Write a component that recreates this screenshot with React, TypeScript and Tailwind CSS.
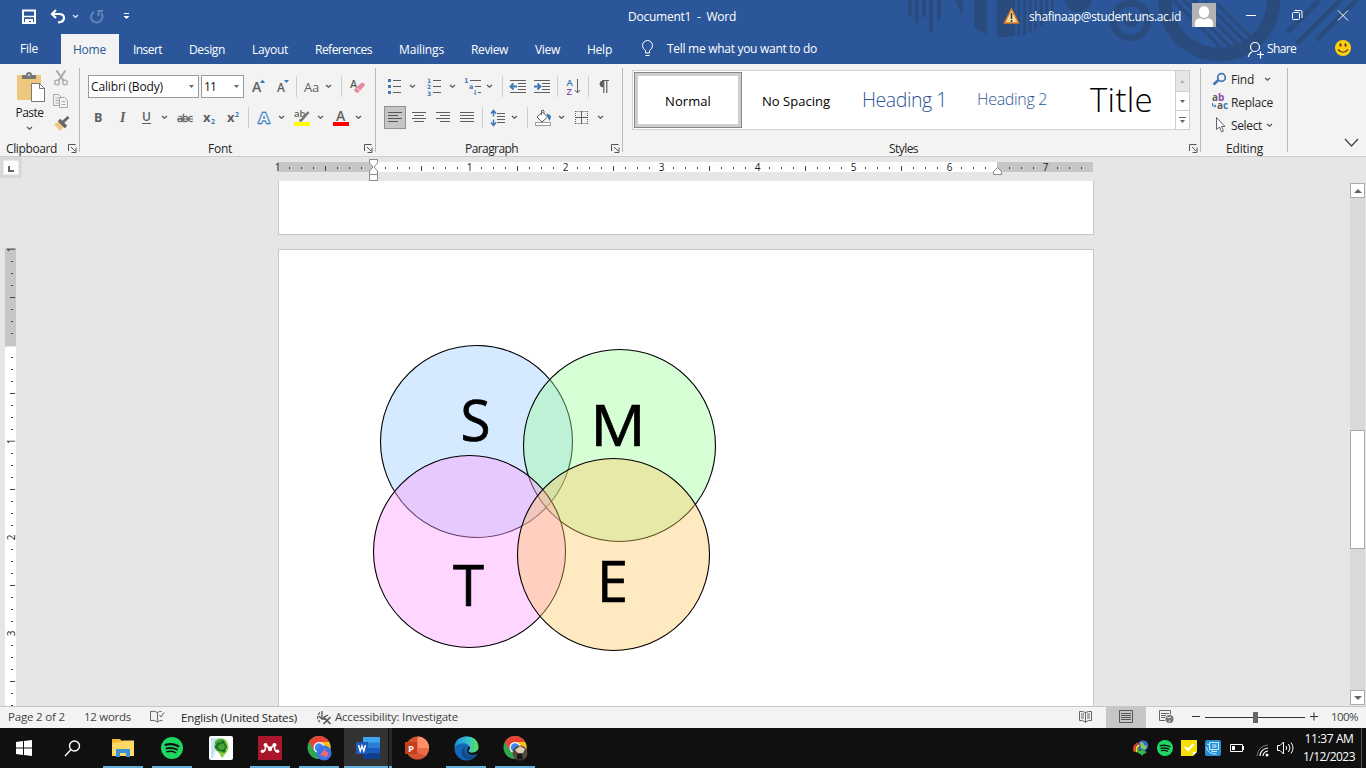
import { useLayoutEffect, useRef, useState, type ReactNode } from "react";

/* A line of text whose tracking is tuned so that it spans `w` pixels. */
function T({ w, children, className = "" }: { w: number; children: string; className?: string }) {
  const ref = useRef<HTMLSpanElement>(null);
  const [ls, setLs] = useState(0);
  useLayoutEffect(() => {
    if (ref.current) {
      const natural = ref.current.getBoundingClientRect().width;
      setLs((w - natural) / children.length);
    }
  }, [w, children]);
  return (
    <span
      ref={ref}
      className={`inline-block shrink-0 whitespace-pre leading-4 ${className}`}
      style={{ letterSpacing: `${ls}px` }}
    >
      {children}
    </span>
  );
}

/* Icon frame; the drawing uses window coordinates through the view box. */
function I({ b, className = "", children }: { b: [number, number, number, number]; className?: string; children: ReactNode }) {
  return (
    <svg width={b[2]} height={b[3]} viewBox={b.join(" ")} className={`shrink-0 overflow-visible ${className}`} fill="none">
      {children}
    </svg>
  );
}

function Chev({ className = "" }: { className?: string }) {
  return (
    <svg width="7" height="5" viewBox="0 0 7 5" className={`shrink-0 ${className}`} fill="none">
      <path d="M1 1l2.5 2.3L6 1" stroke="#555" strokeWidth="1.2" />
    </svg>
  );
}

function Sep({ className = "" }: { className?: string }) {
  return <div className={`h-[21px] w-px shrink-0 bg-[#cfcfcf] ${className}`} />;
}

function Launcher({ className = "" }: { className?: string }) {
  return (
    <svg width="9" height="9" viewBox="0 0 9 9" className={`shrink-0 ${className}`} fill="none" stroke="#555">
      <path d="M.5 7V.5H7.5M3 3l4 4M8 3.5V8.5H3.5" />
    </svg>
  );
}

function Tri({ className = "" }: { className?: string }) {
  return (
    <svg width="5" height="3" viewBox="0 0 5 3" className={`shrink-0 ${className}`}>
      <path d="M0 0h5L2.5 3z" fill="#666" />
    </svg>
  );
}

function Header() {
  return (
    <header className="relative h-16 shrink-0 bg-[#2b579a] text-xs text-white [&_span]:translate-y-px">
      <svg className="absolute right-0 top-0" width="476" height="64" viewBox="0 0 1428 192" fill="#2a4b7d">
        <path d="M54 0h12v47H54zM75 0h11v69H75zM96 0h11v51H96zM117 0h12v96h-12zM141 0h12v59h-12z" />
        <path d="M197 0h22v45Q203 26 197 0zM252 0h39v102Q270 94 252 82zM320 0h42v111H320zM362 0h13v109h-13zM382 0h9v107h-9zM399 0h9v104h-9zM416 0h9v98h-9zM433 0h8v89h-8zM449 0h9v78h-9zM466 0h9v62h-9zM483 0h8v38h-8z" />
        <circle cx="565" cy="-3" r="40" />
        <circle cx="722" cy="62" r="52" fill="none" stroke="#2a4b7d" strokeWidth="20" />
        <circle cx="722" cy="62" r="21" />
        <circle cx="988" cy="0" r="163" fill="none" stroke="#2a4b7d" strokeWidth="41" />
        <path d="M850 0l140 140M880 0l140 140M910 0l132 132M945 5l118 118M980 10l100 100" stroke="#2a4b7d" strokeWidth="10" />
        <path d="M1190 98L1288 0M1220 132L1352 0M1280 120L1400 0" stroke="#2a4b7d" strokeWidth="14" />
      </svg>
      <div className="relative flex h-[34px] items-center pb-0.5">
        <I b={[22, 9, 15, 15]} className="ml-[22px]">
          <path d="M23 10.500h12v12.500H23z" stroke="#fff" strokeWidth="2" />
          <path d="M22 16.500h14" stroke="#fff" strokeWidth="1.500" />
          <path d="M25 19h8v5h-2v-3h-2v3h-4z" fill="#fff" />
        </I>
        <I b={[50, 9, 16, 15]} className="ml-[13px]">
          <path d="M56 10l-4 4 4 4M52 14h7q5 0 5 4t-6 4.500" stroke="#fff" strokeWidth="2.200" />
        </I>
        <svg width="7" height="5" viewBox="0 0 7 5" className="ml-[6px]" fill="none">
          <path d="M1 1l2.500 2.300L6 1" stroke="#dbe4f0" strokeWidth="1.300" />
        </svg>
        <I b={[90, 9, 14, 15]} className="ml-[11px]">
          <path d="M94 11.800A5.700 5.700 0 1 0 101 13M98.500 16v-5h4.500" stroke="#6485b7" strokeWidth="1.900" />
        </I>
        <I b={[123, 13, 7, 8]} className="ml-[19px]">
          <path d="M124 14.500h5" stroke="#fff" />
          <path d="M123.500 17h6l-3 3z" fill="#fff" />
        </I>
        <T w={108} className="ml-[498px]">Document1  -  Word</T>
        <I b={[1004, 7, 16, 16]} className="ml-[268px]">
          <path d="M1011.500 8l7 14h-14z" fill="#f7dca0" stroke="#dc7a22" strokeWidth="1.500" />
          <path d="M1011.500 12v6M1011.500 19v2" stroke="#333" strokeWidth="1.500" />
        </I>
        <T w={152} className="ml-[9px]">shafinaap@student.uns.ac.id</T>
        <I b={[1192, 3, 24, 24]} className="-mt-0.5 ml-[11px]">
          <path d="M1192 3h24v24h-24z" fill="#b3b3b3" />
          <ellipse cx="1204" cy="12" rx="5.200" ry="6" fill="#fff" />
          <path d="M1195 27v-4q0-4 5-5 4 2.500 8 0 5 1 5 5v4z" fill="#fff" />
        </I>
        <I b={[1246, 10, 10, 10]} className="ml-[30px]"><path d="M1246 14.500h10" stroke="#fff" /></I>
        <I b={[1292, 9, 11, 12]} className="ml-[36px]">
          <rect x="1292.500" y="11.500" width="7" height="7" rx="1" stroke="#fff" />
          <path d="M1294.500 9.500h6q1.500 0 1.500 1.500v6" stroke="#fff" />
        </I>
        <I b={[1338, 10, 10, 10]} className="ml-[35px]"><path d="M1338 9.500l10 10M1348 9.500l-10 10" stroke="#fff" /></I>
      </div>
      <nav className="relative flex h-[30px] items-center">
        <T w={18} className="-mt-0.5 ml-5">File</T>
        <div className="ml-[23px] flex h-full w-[58px] items-center bg-[#f3f3f3] pl-3 text-[#2b579a]"><T w={33}>Home</T></div>
        <T w={29} className="ml-[14px]">Insert</T>
        <T w={36} className="ml-[27px]">Design</T>
        <T w={36} className="ml-[27px]">Layout</T>
        <T w={57} className="ml-[27px]">References</T>
        <T w={45} className="ml-[27px]">Mailings</T>
        <T w={37} className="ml-[27px]">Review</T>
        <T w={25} className="ml-[27px]">View</T>
        <T w={25} className="ml-[27px]">Help</T>
        <I b={[641, 41, 13, 18]} className="ml-[29px]">
          <path d="M645.500 54v-2.500q-3-2-3-5a5 5 0 0 1 10 0q0 3-3 5V54zM645.500 56.500h4" stroke="#fff" />
        </I>
        <T w={150} className="-mt-0.5 ml-[13px]">Tell me what you want to do</T>
        <I b={[1248, 40, 16, 17]} className="ml-[431px]">
          <circle cx="1255" cy="46" r="4.500" stroke="#fff" strokeWidth="1.200" />
          <path d="M1248.500 56q.5-4 4-5.500M1260.500 50.500v7M1257 53.500h7" stroke="#fff" strokeWidth="1.200" />
        </I>
        <T w={29} className="-mt-0.5 ml-[3px]">Share</T>
        <I b={[1335, 40, 16, 16]} className="-mt-0.5 ml-[39px]">
          <circle cx="1343" cy="48" r="8" fill="#ffcf0b" />
          <path d="M1340.500 43.500v3M1345.500 43.500v3" stroke="#333" strokeWidth="1.800" />
          <path d="M1338 49.500q5 5.500 10 0" stroke="#4b4020" strokeWidth="1.200" />
        </I>
      </nav>
    </header>
  );
}

function Divider() {
  return <div className="mt-1 h-[84px] w-px shrink-0 bg-[#b9b9b9]" />;
}

function Clipboard() {
  return (
    <section className="flex w-[79px] shrink-0 flex-col">
      <div className="flex h-[76px]">
        <div className="ml-[14px] flex w-[31px] flex-col items-center pt-[7px]">
          <I b={[15, 71, 31, 32]} className="ml-px">
            <path d="M17 75h24v25H17z" fill="#edc77d" />
            <path d="M22 79v-4h4q0-3 3-3t3 3h4v4z" fill="#777" />
            <circle cx="29" cy="75" r="1" fill="#eee" />
            <path d="M31.500 83.500h8l5 5v13h-13z" fill="#fff" stroke="#777" />
            <path d="M39.500 83.500v5h5" stroke="#777" />
          </I>
          <T w={28} className="mt-0.5 text-xs text-[#222]">Paste</T>
          <Chev className="mt-[5px]" />
        </div>
        <div className="ml-[8px] flex flex-col gap-[7px] pt-[6px]">
          <I b={[53, 70, 16, 16]}>
            <path d="M56.500 70.500l7 10M65.500 70.500l-7 10" stroke="#aaa" strokeWidth="2" />
            <circle cx="57" cy="82.500" r="2.300" stroke="#aaa" strokeWidth="1.300" />
            <circle cx="65" cy="82.500" r="2.300" stroke="#aaa" strokeWidth="1.300" />
          </I>
          <I b={[53, 93, 16, 16]}>
            <path d="M53.500 94.500h5l3 3v8h-8zM55.500 98h4M55.500 100.500h4M55.500 103h4" stroke="#aaa" />
            <path d="M59.500 97.500h5l3 3v7h-8z" fill="#f3f3f3" stroke="#aaa" />
            <path d="M61.500 101.500h4M61.500 104.500h4" stroke="#aaa" />
          </I>
          <I b={[53, 116, 17, 16]}>
            <path d="M54 124l5-2 5 5-4 4z" fill="#edc77d" />
            <path d="M59 120l7 7" stroke="#666" strokeWidth="3.500" />
            <path d="M63 122l5.500-5" stroke="#666" strokeWidth="3" />
          </I>
        </div>
      </div>
      <div className="flex h-4 items-center [&_span]:translate-y-px">
        <T w={51} className="ml-[6px]">Clipboard</T>
        <Launcher className="ml-[11px]" />
      </div>
    </section>
  );
}

const G = "#5f5f5f";

function FontGroup() {
  return (
    <section className="flex w-[295px] shrink-0 flex-col pt-[11px]">
      <div className="flex h-[23px] items-center">
        <div className="ml-2 flex h-[23px] w-[111px] shrink-0 items-center border border-[#9a9a9a] bg-white pl-0.5 text-[#111]">
          <T w={72}>Calibri (Body)</T>
          <Tri className="ml-[26px]" />
        </div>
        <div className="ml-0.5 flex h-[23px] w-[43px] shrink-0 items-center border border-[#9a9a9a] bg-white pl-0.5 text-[#111]">
          <T w={12}>11</T>
          <Tri className="ml-[18px]" />
        </div>
        <I b={[252, 76, 14, 20]} className="ml-2">
          <text x="252" y="91" fontSize="14" fontWeight="600" fill={G}>A</text>
          <path d="M260 82l2.500-3.500L265 82z" fill="#3e78b5" />
        </I>
        <I b={[277, 76, 14, 20]} className="ml-[11px]">
          <text x="277" y="91" fontSize="12" fontWeight="600" fill={G}>A</text>
          <path d="M284 79l2.500 3 2.500-3z" fill="#3e78b5" />
        </I>
        <Sep className="ml-[5px]" />
        <T w={15} className="ml-[7px] text-[13px] text-[#5f5f5f]">Aa</T>
        <Chev className="ml-[6px]" />
        <Sep className="ml-[9px]" />
        <I b={[350, 77, 16, 17]} className="ml-2">
          <text x="350" y="87" fontSize="11" fontWeight="600" fill={G}>A</text>
          <path d="M354 89l6-6q4-3 5 1l-6 7q-3 2-5-2z" fill="#e8879a" />
          <path d="M356.500 86.500l4 4" stroke="#f9e3e7" />
        </I>
      </div>
      <div className="mt-2 flex h-[23px] items-center">
        <I b={[94, 108, 10, 18]} className="ml-[14px]"><text x="94" y="120.500" fontSize="12.500" fontWeight="700" fill={G}>B</text></I>
        <I b={[118, 108, 10, 18]} className="ml-[14px]"><text x="120" y="120.500" fontSize="14" fontStyle="italic" fontWeight="600" fontFamily="Liberation Serif" fill={G}>I</text></I>
        <I b={[142, 108, 10, 18]} className="ml-[14px]">
          <text x="142" y="120" fontSize="12" fontWeight="600" fill={G}>U</text>
          <path d="M142 122.500h9" stroke={G} />
        </I>
        <Chev className="ml-[9px]" />
        <I b={[178, 108, 17, 18]} className="ml-[9px]">
          <text x="178" y="121" fontSize="11" textLength="16" fill={G} stroke={G} strokeWidth=".3">abc</text>
          <path d="M178 118h16" stroke={G} />
        </I>
        <I b={[204, 108, 14, 18]} className="ml-[9px]">
          <text x="204" y="120.500" fontSize="13" fontWeight="700" fill={G}>x</text>
          <text x="212" y="123" fontSize="7" fontWeight="700" fill="#3e78b5">2</text>
        </I>
        <I b={[228, 108, 14, 18]} className="ml-[10px]">
          <text x="228" y="120.500" fontSize="13" fontWeight="700" fill={G}>x</text>
          <text x="236" y="115.500" fontSize="7" fontWeight="700" fill="#3e78b5">2</text>
        </I>
        <Sep className="ml-[7px]" />
        <I b={[257, 108, 17, 18]} className="ml-[7px]">
          <text x="260" y="122" fontSize="15" fontWeight="600" fill="#fff" stroke="#9fc1e4" strokeWidth="3.500" strokeLinejoin="round" paintOrder="stroke">A</text>
          <text x="260" y="122" fontSize="15" fontWeight="600" fill="#fff" stroke="#3e78b5" strokeWidth="1.800" paintOrder="stroke">A</text>
        </I>
        <Chev className="ml-[5px]" />
        <I b={[295, 108, 17, 18]} className="ml-[9px]">
          <text x="295" y="116" fontSize="9.500" fontWeight="600" fill={G}>ab</text>
          <path d="M309.500 111l-7 8-2 1" stroke="#777" strokeWidth="2.600" />
          <path d="M295 121h16v4h-16z" fill="#ff0" />
        </I>
        <Chev className="ml-[6px]" />
        <I b={[334, 108, 16, 18]} className="ml-[9px]">
          <text x="337" y="120" fontSize="14" fontWeight="600" fill={G}>A</text>
          <path d="M334 121h16v4h-16z" fill="red" />
        </I>
        <Chev className="ml-[6px]" />
      </div>
      <div className="mt-[11px] flex h-4 items-center [&_span]:translate-y-px">
        <T w={24} className="ml-32">Font</T>
        <Launcher className="ml-[132px]" />
      </div>
    </section>
  );
}

function Paragraph() {
  return (
    <section className="flex w-[246px] shrink-0 flex-col pt-[11px]">
      <div className="flex h-[23px] items-center">
        <I b={[387, 77, 15, 18]} className="ml-[11px]">
          <path d="M393 79.500h8M393 85.500h8M393 91.500h8" stroke={G} />
          <path d="M388 78h3v3h-3zM388 84h3v3h-3zM388 90h3v3h-3z" fill="#3e78b5" />
        </I>
        <Chev className="ml-[7px]" />
        <I b={[426, 77, 16, 18]} className="ml-[10px]">
          <path d="M433 79.500h8M433 85.500h8M433 91.500h8" stroke={G} />
          <g fontSize="6" fontWeight="700" fill="#3e78b5" fontFamily="DejaVu Sans"><text x="427" y="81.500">1</text><text x="427" y="88">2</text><text x="427" y="94.500">3</text></g>
        </I>
        <Chev className="ml-[7px]" />
        <I b={[464, 77, 18, 18]} className="ml-[8px]">
          <path d="M470 79.500h11M475 85.500h6M478 91.500h3" stroke={G} />
          <g fontSize="6.500" fontWeight="700" fill="#3e78b5" fontFamily="DejaVu Sans"><text x="464" y="82">1</text><text x="469" y="88">a</text><text x="474" y="94">i</text></g>
        </I>
        <Chev className="ml-[4px]" />
        <Sep className="ml-[9px]" />
        <I b={[510, 77, 16, 18]} className="ml-[7px]">
          <path d="M510 79.500h16M518 82.500h8M518 85.500h8M518 88.500h8M510 91.500h16" stroke={G} />
          <path d="M517 85.500h-6M513.500 82.500l-3 3 3 3" stroke="#3e78b5" strokeWidth="1.800" />
        </I>
        <I b={[534, 77, 16, 18]} className="ml-[8px]">
          <path d="M534 79.500h16M542 82.500h8M542 85.500h8M542 88.500h8M534 91.500h16" stroke={G} />
          <path d="M534 85.500h6M537.500 82.500l3 3-3 3" stroke="#3e78b5" strokeWidth="1.800" />
        </I>
        <Sep className="ml-[7px]" />
        <I b={[566, 77, 15, 18]} className="ml-[8px]">
          <text x="566.500" y="85" fontSize="9.500" fontWeight="600" fill="#3e78b5">A</text>
          <text x="566.500" y="94" fontSize="9.500" fontWeight="600" fill="#8d4bb0">Z</text>
          <path d="M577.500 78v13M575 89l2.500 3 2.500-3" stroke={G} />
        </I>
        <Sep className="ml-[7px]" />
        <I b={[599, 78, 10, 16]} className="ml-[10px]">
          <path d="M603 80a3 3 0 0 0 0 6z" fill={G} stroke={G} />
          <path d="M602 79.500h7M603.800 79v13M606.800 79v13" stroke={G} strokeWidth="1.200" />
        </I>
      </div>
      <div className="mt-2 flex h-[23px] items-center">
        <div className="ml-[8px] flex h-[23px] w-[22px] items-center justify-center border border-[#919191] bg-[#c6c6c6]">
          <I b={[388, 111, 14, 13]}><path d="M388 112.500h14M388 115.500h10M388 118.500h14M388 121.500h10" stroke="#555" /></I>
        </div>
        <I b={[412, 111, 14, 13]} className="ml-[6px]"><path d="M412 112.500h14M414 115.500h10M412 118.500h14M414 121.500h10" stroke={G} /></I>
        <I b={[436, 111, 14, 13]} className="ml-[10px]"><path d="M436 112.500h14M440 115.500h10M436 118.500h14M440 121.500h10" stroke={G} /></I>
        <I b={[460, 111, 14, 13]} className="ml-[10px]"><path d="M460 112.500h14M460 115.500h14M460 118.500h14M460 121.500h14" stroke={G} /></I>
        <Sep className="ml-[8px]" />
        <I b={[490, 108, 15, 18]} className="ml-[7px]">
          <path d="M497 112.500h8M497 115.500h8M497 118.500h8M497 121.500h8" stroke={G} />
          <path d="M493.500 110v5.500M493.500 118.500v6M491 112.500l2.500-3 2.500 3M491 121.500l2.500 3 2.500-3" stroke="#3e78b5" strokeWidth="1.500" />
        </I>
        <Chev className="ml-[6px]" />
        <Sep className="ml-[9px]" />
        <I b={[535, 108, 17, 18]} className="ml-[7px]">
          <path d="M542.500 111l5 5-5.500 5-5-5zM541.500 114v-4.500q2-1.500 2.500 1v2" fill="#fff" stroke={G} />
          <path d="M546.500 112.500q5 1 4.500 4l-1.500 3.500-2-4z" fill="#3e78b5" />
          <path d="M535.500 121.500h15v3h-15z" fill="#fff" stroke="#999" />
        </I>
        <Chev className="ml-[6px]" />
        <I b={[575, 110, 14, 14]} className="ml-[10px]">
          <path d="M575.500 110.500h12.500M575.500 122.500h12.500M575.500 110v13M587.500 110v13" stroke={G} strokeDasharray="1 1" />
          <path d="M575 116.500h13M581.500 110v13" stroke={G} />
        </I>
        <Chev className="ml-[8px]" />
      </div>
      <div className="mt-[11px] flex h-4 items-center [&_span]:translate-y-px">
        <T w={53} className="ml-[89px]">Paragraph</T>
        <Launcher className="ml-[93px]" />
      </div>
    </section>
  );
}

function Styles() {
  return (
    <section className="flex w-[577px] shrink-0 flex-col pl-[9px] pt-[6px]">
      <div className="flex h-[60px] w-[558px] border border-[#cfcfcf] bg-white text-black">
        <div className="ml-px mt-px flex h-14 w-[108px] shrink-0 border border-[#868686]">
          <div className="flex flex-1 items-center justify-center border-[3px] border-[#cdcdcd] pt-0.5"><T w={46} className="text-[13px]">Normal</T></div>
        </div>
        <div className="flex items-center">
          <T w={68} className="ml-5 mt-0.5 text-[13px]">No Spacing</T>
          <T w={85} className="ml-8 text-[19.5px] font-light text-[#2f5496]">Heading 1</T>
          <T w={70} className="-mt-0.5 ml-[30px] text-[16px] font-light text-[#2f5496]">Heading 2</T>
          <T w={63} className="ml-[43px] text-[33px] font-light leading-8">Title</T>
        </div>
        <div className="ml-auto flex w-[14px] shrink-0 flex-col border-l border-[#cfcfcf]">
          <div className="flex h-[21px] items-center justify-center border-b border-[#cfcfcf] bg-[#e6e6e6]"><Tri className="rotate-180 opacity-40" /></div>
          <div className="flex h-[19px] items-center justify-center border-b border-[#cfcfcf]"><Tri /></div>
          <div className="flex flex-1 flex-col items-center justify-center gap-0.5"><div className="h-px w-[7px] bg-[#666]" /><Tri /></div>
        </div>
      </div>
      <div className="mt-[10px] flex h-4 items-center [&_span]:translate-y-px">
        <T w={29} className="ml-[257px]">Styles</T>
        <Launcher className="ml-[271px]" />
      </div>
    </section>
  );
}

function Editing() {
  return (
    <section className="flex w-[86px] shrink-0 flex-col pt-[6px] [&_span]:translate-y-px">
      <div className="flex h-[18px] items-center">
        <I b={[1212, 70, 16, 16]} className="ml-[11px]">
          <circle cx="1221.500" cy="76.500" r="3.800" stroke="#3e78b5" strokeWidth="1.700" />
          <path d="M1218.500 79l-5 4.500" stroke="#3e78b5" strokeWidth="2.600" />
        </I>
        <T w={23} className="ml-[3px]">Find</T>
        <Chev className="ml-[10px]" />
      </div>
      <div className="mt-[5px] flex h-[18px] items-center">
        <I b={[1211, 92, 18, 18]} className="ml-[10px]">
          <text x="1212" y="100" fontSize="10" fontWeight="700" fill={G}>a<tspan fill="#8d4bb0">b</tspan></text>
          <text x="1217" y="108" fontSize="10" fontWeight="700" fill={G}>a<tspan fill="#3e78b5">c</tspan></text>
          <path d="M1212.500 102v3h3.500M1214.500 103.500l1.500 1.500-1.500 1.500" stroke="#3e78b5" />
        </I>
        <T w={42} className="ml-0.5">Replace</T>
      </div>
      <div className="mt-[5px] flex h-[18px] items-center">
        <I b={[1214, 116, 12, 16]} className="ml-[13px]">
          <path d="M1216.500 116.500v12l3-2.500 2 5 2-1-2-4.500h3.500z" fill="#fff" stroke="#666" />
        </I>
        <T w={31} className="ml-[5px]">Select</T>
        <Chev className="ml-1" />
      </div>
      <div className="mt-1.5 flex h-4 items-center"><T w={37} className="ml-[25px]">Editing</T></div>
    </section>
  );
}

function Ribbon() {
  return (
    <div className="flex h-[93px] shrink-0 border-b border-[#cdcdcd] bg-[#f3f3f3] text-xs text-[#262626]">
      <Clipboard /><Divider /><FontGroup /><Divider /><Paragraph /><Divider /><Styles /><Divider /><Editing /><Divider />
      <I b={[1344, 138, 16, 10]} className="ml-[56px] mt-[74px]"><path d="M1345 139l6.500 7 6.500-7" stroke="#444" strokeWidth="1.300" /></I>
    </div>
  );
}

function HRuler() {
  const marks = Array.from({ length: 67 }, (_, i) => i + 1).filter((i) => i !== 8 && i !== 60);
  return (
    <I b={[276, 157, 818, 24]} className="ml-[254px]">
      <path d="M277.500 162h96v10h-96zM997 162h96v10h-96z" fill="#c6c6c6" />
      <path d="M374 162h623v10H374z" fill="#fff" />
      {marks.map((i) => {
        const x = 277 + i * 12;
        if (i % 8 === 0) return <text key={i} x={x + 0.5} y="171" fontSize="10" textAnchor="middle" fill="#222">{String((i - 8) / 8)}</text>;
        return i % 4 === 0 ? <path key={i} d={`M${x + 0.5} 166v5`} stroke="#444" /> : <path key={i} d={`M${x + 0.5} 167v2`} stroke="#444" />;
      })}
      <text x="277.500" y="171" fontSize="10" textAnchor="middle" fill="#222">1</text>
      <path d="M369.500 159.500h8v3.500l-3.500 4 3.500 4v9.500h-8V171l3.500-4-3.500-4zM369.500 174.500h8" fill="#fff" stroke="#8a8a8a" />
      <path d="M997.500 167.500l4 4v3h-8v-3z" fill="#fff" stroke="#8a8a8a" />
    </I>
  );
}

function VRuler() {
  const marks = Array.from({ length: 38 }, (_, i) => i + 1).filter((i) => i !== 8);
  return (
    <I b={[4, 247, 13, 459]} className="ml-1 mt-[66px]">
      <path d="M5 248h11v98H5z" fill="#c6c6c6" />
      <path d="M5 347h11v359H5z" fill="#fff" />
      {marks.map((i) => {
        const y = 249 + i * 12;
        if (i % 8 === 0) return <text key={i} transform={`translate(15 ${y + 0.5}) rotate(-90)`} fontSize="10" textAnchor="middle" fill="#222">{String((i - 8) / 8)}</text>;
        return i % 4 === 0 ? <path key={i} d={`M10 ${y + 0.5}h5`} stroke="#444" /> : <path key={i} d={`M11 ${y + 0.5}h2`} stroke="#444" />;
      })}
      <text transform="translate(15 249.500) rotate(-90)" fontSize="10" textAnchor="middle" fill="#222">1</text>
    </I>
  );
}

function Venn() {
  return (
    <svg width="346" height="310" viewBox="371 343 346 310" className="ml-[92px] mt-[93px] block">
      <g stroke="#000" strokeWidth="1.100">
        <circle cx="476.500" cy="441.500" r="96" fill="#d6eaff" />
        <circle cx="619.500" cy="445.500" r="96" fill="#98ff98" fillOpacity=".4" />
        <circle cx="469.500" cy="551.500" r="96" fill="#ff98ff" fillOpacity=".4" />
        <circle cx="613.500" cy="554.500" r="96" fill="#ffc861" fillOpacity=".4" />
      </g>
      <g fontSize="56" fill="#000" stroke="#000" strokeWidth=".7">
        <text x="460.500" y="440.500" textLength="30" lengthAdjust="spacingAndGlyphs">S</text>
        <text x="590.500" y="445.500" textLength="55" lengthAdjust="spacingAndGlyphs">M</text>
        <text x="453" y="606" textLength="31" lengthAdjust="spacingAndGlyphs">T</text>
        <text x="597" y="602" textLength="31" lengthAdjust="spacingAndGlyphs">E</text>
      </g>
    </svg>
  );
}

function Workspace() {
  return (
    <main className="flex h-[549px] shrink-0 flex-col bg-[#e6e6e6]">
      <div className="flex h-6 shrink-0">
        <div className="h-[21px] w-[22px] shrink-0 bg-[#d9d9d9] pl-[3px] pt-[3px]">
          <div className="flex h-[15px] w-4 items-center justify-center border border-[#e8e8e8] bg-white">
            <div className="mt-0.5 h-[6px] w-[6px] border-b-2 border-l-2 border-[#666]" />
          </div>
        </div>
        <HRuler />
      </div>
      <div className="flex h-[525px]">
        <VRuler />
        <div className="ml-[261px] flex w-[816px] shrink-0 flex-col">
          <div className="h-[54px] shrink-0 border border-t-0 border-[#c6c6c6] bg-white" />
          <div className="mt-[14px] flex-1 border border-b-0 border-[#c6c6c6] bg-white"><Venn /></div>
        </div>
        <div className="ml-auto mr-px mt-0.5 flex h-[522px] w-[15px] flex-col bg-[#d9d9d9]">
          <div className="flex h-[15px] items-center justify-center border border-[#ababab] bg-white">
            <svg width="8" height="4" viewBox="0 0 8 4"><path d="M0 4h8L4 0z" fill="#666" /></svg>
          </div>
          <div className="mt-[232px] h-[119px] border border-[#ababab] bg-white" />
          <div className="mt-auto flex h-[15px] items-center justify-center border border-[#ababab] bg-white">
            <svg width="8" height="4" viewBox="0 0 8 4"><path d="M0 0h8L4 4z" fill="#666" /></svg>
          </div>
        </div>
      </div>
    </main>
  );
}

function StatusBar() {
  return (
    <div className="flex h-[22px] shrink-0 items-center border-t border-[#c6c6c6] bg-[#f3f3f3] text-[11.500px] text-[#444] [&_span]:-translate-y-px">
      <T w={57} className="ml-2">Page 2 of 2</T>
      <T w={47} className="ml-[19px]">12 words</T>
      <I b={[149, 711, 16, 14]} className="ml-[18px]">
        <path d="M157.500 712.500q-3-2-7-1v9q4-1 7 1.500 2-2 5-1.500M157.500 712.500v9M157.500 712.500q2-1.500 4-1" stroke="#666" />
        <path d="M159.500 715l1.500 2 3-4.500" stroke="#666" />
      </I>
      <T w={116} className="ml-4 mt-0.5 text-[#222]">English (United States)</T>
      <I b={[315, 709, 17, 16]} className="ml-[18px]">
        <path d="M320 711.500a6 6 0 0 0 0 9.500" stroke="#555" strokeWidth="1.200" strokeDasharray="3 1" />
        <path d="M322 710v8M319 715l3 3h4M328 714l-4 2" stroke="#555" strokeWidth="1.300" />
        <path d="M323.500 716l7 7M330.500 716l-7 7" stroke="#555" strokeWidth="1.700" />
      </I>
      <T w={123} className="ml-[3px]">Accessibility: Investigate</T>
      <I b={[1078, 711, 15, 14]} className="ml-[620px]">
        <path d="M1085.500 712.500q-3-1.500-6-1v9q3-.5 6 1.500 3-2 6-1.500v-9q-3-.5-6 1v10M1081 714h3M1081 716h3M1081 718h3M1087 714h3M1087 716h3M1087 718h3" stroke="#666" />
      </I>
      <div className="ml-[13px] flex h-full w-10 shrink-0 items-center justify-center bg-[#c6c6c6]">
        <I b={[1119, 711, 14, 13]}><path d="M1119.500 710.500h13v12h-13zM1121 713.500h10M1121 715.500h10M1121 717.500h10M1121 719.500h10" stroke="#555" /></I>
      </div>
      <I b={[1159, 711, 15, 14]} className="ml-[13px]">
        <path d="M1165 720.500h-5.500v-10h11v4M1161 713.500h8M1161 715.500h5M1161 717.500h4" stroke="#666" />
        <circle cx="1169.500" cy="719" r="4" fill="#777" />
        <path d="M1167 717l2 1 2-1M1170 720l-1 2" stroke="#eee" />
      </I>
      <I b={[1191, 711, 128, 14]} className="ml-[17px]">
        <path d="M1192 716.500h8M1205 717.500h100M1310 716.500h8M1314 712.500v8" stroke="#333" />
        <path d="M1253 712h5v11h-5z" fill="#666" />
      </I>
      <T w={27} className="ml-3">100%</T>
    </div>
  );
}

function Spotify({ size }: { size: number }) {
  return (
    <svg width={size} height={size} viewBox="0 0 24 24" fill="none" className="shrink-0">
      <circle cx="12" cy="12" r="12" fill="#1ed760" />
      <path d="M5 8.500q7.500-2 14 1.500" stroke="#111" strokeWidth="2.400" strokeLinecap="round" />
      <path d="M6 12.500q6-1.500 11.500 1.200" stroke="#111" strokeWidth="2" strokeLinecap="round" />
      <path d="M6.500 16q5-1.200 9.500 1" stroke="#111" strokeWidth="1.700" strokeLinecap="round" />
    </svg>
  );
}

function Chrome({ person = false }: { person?: boolean }) {
  return (
    <svg width="25" height="26" viewBox="0 0 25 26" fill="none" className="shrink-0">
      <circle cx="12" cy="12.500" r="11.500" fill="#2fa84f" />
      <path d="M12 12.500L2 6.700A11.500 11.500 0 0 1 22 6.700z" fill="#e94335" />
      <path d="M12 7h10.200A11.500 11.500 0 0 1 12 24l5-9z" fill="#fbc116" />
      <path d="M2 6.700l5 8.500 5-7z" fill="#e94335" />
      <circle cx="12" cy="12.500" r="5.500" fill="#fff" />
      <circle cx="12" cy="12.500" r="4.300" fill="#4285f4" />
      {person ? (
        <>
          <circle cx="17" cy="18" r="7.500" fill="#544a42" />
          <path d="M12 15l5-4 5 3-2 4h-5z" fill="#ddd0b0" />
          <path d="M14 19h5l1 5.500h-6z" fill="#191919" />
        </>
      ) : (
        <>
          <circle cx="17" cy="18" r="7.500" fill="#3b73ea" />
          <path d="M18.500 13v6.500l-6 1.500zM19 16.500l2.500 1-1 4-4.500.5z" fill="#f0686f" />
        </>
      )}
    </svg>
  );
}

function Task({ children, className = "", open = true }: { children: ReactNode; className?: string; open?: boolean }) {
  return (
    <div className={`flex h-10 w-10 shrink-0 flex-col items-center ${className}`}>
      <div className="flex h-[38px] items-center pt-0.5">{children}</div>
      {open && <div className="h-0.5 w-full bg-[#63afd8]" />}
    </div>
  );
}

function Taskbar() {
  return (
    <footer className="flex h-10 shrink-0 items-center bg-[#101010] text-white">
      <svg width="16" height="16" viewBox="0 0 16 16" className="ml-4 shrink-0" fill="#fff"><path d="M0 2l7-1v6.500H0zM8 1l8-1v7.500H8zM0 8.500h7V15l-7-1zM8 8.500h8V16l-8-1z" /></svg>
      <svg width="17" height="17" viewBox="0 0 17 17" className="ml-8 shrink-0" fill="none" stroke="#fff" strokeWidth="1.400"><circle cx="10.500" cy="6" r="5" /><path d="M7 9.500L1 16" /></svg>
      <Task className="ml-[22px]">
        <svg width="22" height="20" viewBox="0 0 22 20">
          <path d="M0 1h8l2 2h12v15H0z" fill="#f5b92e" /><path d="M0 5l9-1 2-1.500h11V18H0z" fill="#ffd867" /><path d="M4 11h14v8h-4v-4H8v4H4z" fill="#3993d5" />
        </svg>
      </Task>
      <Task className="ml-[9px]"><Spotify size={22} /></Task>
      <Task className="ml-[9px]" open={false}>
        <svg width="24" height="24" viewBox="0 0 24 24" fill="none">
          <rect width="24" height="24" rx="2" fill="#fbfdfe" />
          <path d="M2 2h9L4 22H2z" fill="#c9e4f7" />
          <path d="M6 5q5-5 11-1 5 7 0 13l-4 5-3-5q-6-4-4-12z" fill="#8acb42" />
          <path d="M6 6q5-5 9-2l3 8-4 5-7-3z" fill="#46a536" />
          <path d="M9 8l5-2 3 4-2 5-5-1-3-3z" stroke="#186d28" strokeWidth="1.500" />
          <g fill="#186d28"><circle cx="9" cy="8" r="1.500" /><circle cx="14" cy="6" r="1.500" /><circle cx="7" cy="11" r="1.500" /><circle cx="15" cy="15" r="1.500" /></g>
        </svg>
      </Task>
      <Task className="ml-[9px]">
        <svg width="24" height="24" viewBox="0 0 24 24" fill="none">
          <path d="M0 0h24v24H0z" fill="#aa162b" />
          <path d="M4.500 15.500q3 0 3-4.500M19.500 15.500q-3 0-3-4.500M8 8.500q1 3 4 3t4-3" stroke="#fff" strokeWidth="1.600" />
          <circle cx="7.500" cy="9" r="2" fill="#fff" /><circle cx="16.500" cy="9" r="2" fill="#fff" /><circle cx="12" cy="13" r="2.200" fill="#fff" />
          <circle cx="4.500" cy="15.200" r="1.800" fill="#fff" /><circle cx="19.500" cy="15.200" r="1.800" fill="#fff" />
        </svg>
      </Task>
      <Task className="ml-[9px]"><Chrome /></Task>
      <div className="ml-[5px] flex">
        <Task className="w-[44px] bg-[#333]">
          <svg width="24" height="22" viewBox="0 0 24 22" className="ml-1">
            <path d="M7 0h17v6H7z" fill="#41a5ee" /><path d="M7 5.500h17V11H7z" fill="#2b7cd3" /><path d="M7 11h17v5.500H7z" fill="#185abd" /><path d="M7 16.500h17V22H7z" fill="#103f91" />
            <path d="M0 5h12v12H0z" fill="#185abd" />
            <path d="M2.500 8l1.700 6L6 9l1.800 5 1.700-6" fill="none" stroke="#fff" strokeWidth="1.500" />
          </svg>
        </Task>
        <div className="flex h-10 w-1 flex-col justify-end border-l border-[#101010] bg-[#282828]"><div className="h-0.5 bg-[#63afd8]" /></div>
      </div>
      <Task className="ml-[5px]" open={false}>
        <svg width="24" height="24" viewBox="0 0 24 24">
          <circle cx="12.500" cy="12" r="11.500" fill="#d35230" /><path d="M12.500.5A11.500 11.500 0 0 1 24 12H12.500z" fill="#ff8f6b" /><path d="M1 12h23a11.500 11.500 0 0 1-3 8z" fill="#ed6c47" />
          <path d="M0 6h12v12H0z" fill="#c43e1c" /><text x="3" y="15.500" fontSize="9.500" fontWeight="700" fill="#fff">P</text>
        </svg>
      </Task>
      <Task className="ml-[9px]">
        <svg width="25" height="25" viewBox="0 0 24 24">
          <defs><linearGradient id="edge" x1="0" x2="1"><stop stopColor="#1d8fd8" /><stop offset=".55" stopColor="#35c1d0" /><stop offset="1" stopColor="#5be04a" /></linearGradient></defs>
          <circle cx="12" cy="12" r="11.500" fill="#1367b6" />
          <path d="M.5 11Q1 1 12 .5q10 0 11.500 9 0 7-7 6.500-3-.5-2-2.500 2-5-4-6.500-7 0-10 4z" fill="url(#edge)" />
          <path d="M12 10q-3 2-1 6 3 5 11 1.500-2 4-6 5.500-8-1-9-7 0-5 5-6z" fill="#114a8b" />
          <path d="M14 13.500q-1 2.500 2.500 2.500 4 .5 7-3 0 3-1 4-8 3-10-2 0-4 2-5 2 1-.5 3.500z" fill="#111" />
        </svg>
      </Task>
      <Task className="ml-[9px]"><Chrome person /></Task>
      <svg width="16" height="16" viewBox="0 0 16 16" fill="none" className="ml-[598px] shrink-0">
        <circle cx="10" cy="5.500" r="5.300" fill="#3567c8" /><path d="M7 2q4 0 4 3l3 1-2 4-4-2z" fill="#8bcb55" />
        <path d="M5 3Q-1 7 2 12" stroke="#e53b2c" strokeWidth="2" /><path d="M6 5Q2 8 4 12" stroke="#ffd827" strokeWidth="2" /><path d="M6 8q0 3 2 3v-2l6 3-6 4v-2q-4 0-4-4z" fill="#3ab54a" />
      </svg>
      <div className="ml-2"><Spotify size={16} /></div>
      <svg width="16" height="16" viewBox="0 0 16 16" fill="none" className="ml-2 shrink-0"><path d="M0 0h16v12h-4v4H0z" fill="#f7e008" /><path d="M12 16v-4h4z" fill="#fff" /><path d="M4 7l3 3 5.500-6" stroke="#fff" strokeWidth="2" /></svg>
      <svg width="16" height="16" viewBox="0 0 16 16" fill="none" className="ml-2 shrink-0"><rect width="16" height="16" rx="2" fill="#288ed6" /><path d="M4.500 2.500h9v7h-9zM7 9.500v2h5M7 5h4v2H7M1.500 7q1 7 10 7M2 4q3 0 3 4" stroke="#c7ebff" /></svg>
      <svg width="16" height="16" viewBox="0 0 16 16" fill="none" className="ml-[9px] shrink-0"><path d="M.5 4.500h12v7H.5zM13.500 6v4" stroke="#fff" /><path d="M2 6h3v4H2z" fill="#fff" /></svg>
      <svg width="14" height="14" viewBox="0 0 14 14" fill="none" className="ml-[10px] mt-[3px] shrink-0"><path d="M1 13Q2 3 12 2" stroke="#777" /><path d="M4 13Q4.500 6 12 5M7 13Q7.500 8.500 12 8" stroke="#fff" strokeWidth="1.200" /><circle cx="11" cy="12" r="1.500" fill="#fff" /></svg>
      <svg width="17" height="16" viewBox="0 0 17 16" fill="none" stroke="#fff" className="ml-[7px] shrink-0"><path d="M.5 5.500H3L6.500 2v12L3 10.500H.5zM9 6q1.500 2 0 4M11.500 4q3 4 0 8M14 2.500q4 5.500 0 11" /></svg>
      <div className="ml-[8px] flex w-[54px] shrink-0 flex-col items-center gap-0.5 text-xs">
        <T w={49}>11:37 AM</T>
        <T w={52}>1/12/2023</T>
      </div>
      <div className="ml-auto mr-1 h-full w-px bg-[#555]" />
    </footer>
  );
}

export default function App() {
  return (
    <div className="flex h-[768px] w-[1366px] flex-col overflow-hidden font-['Open_Sans','Noto_Sans',sans-serif]">
      <Header />
      <Ribbon />
      <Workspace />
      <StatusBar />
      <Taskbar />
    </div>
  );
}
